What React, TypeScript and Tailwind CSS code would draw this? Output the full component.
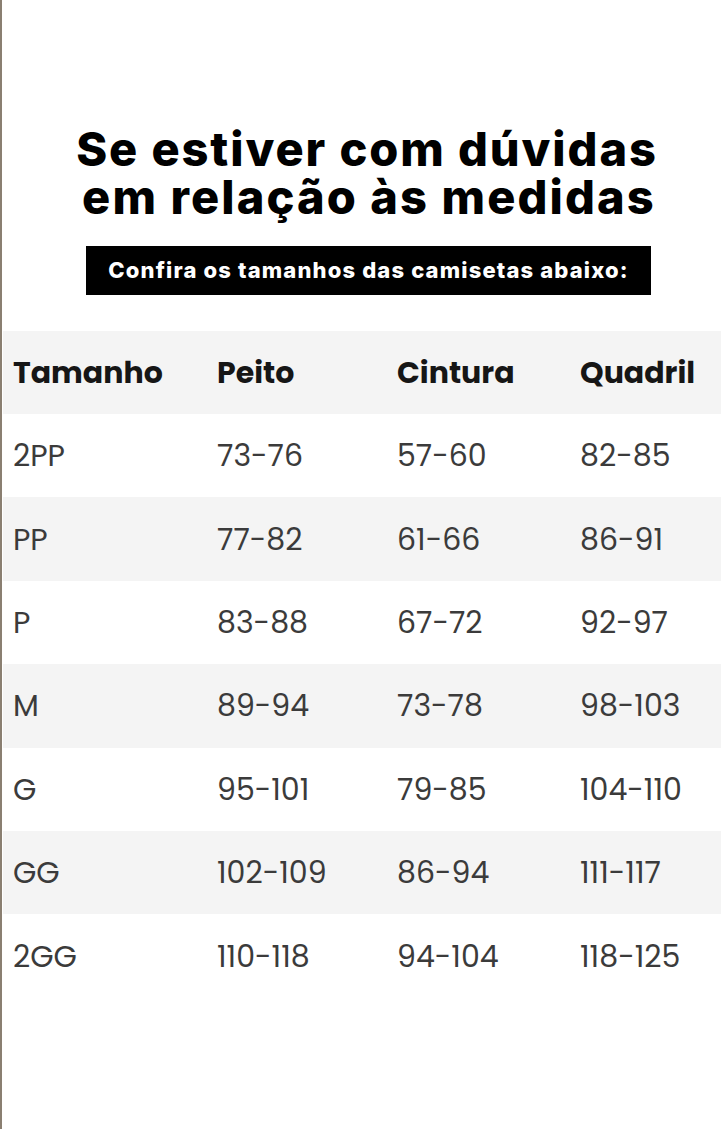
import React from "react";

const rows: [string, string, string, string][] = [
  ["2PP", "73-76", "57-60", "82-85"],
  ["PP", "77-82", "61-66", "86-91"],
  ["P", "83-88", "67-72", "92-97"],
  ["M", "89-94", "73-78", "98-103"],
  ["G", "95-101", "79-85", "104-110"],
  ["GG", "102-109", "86-94", "111-117"],
  ["2GG", "110-118", "94-104", "118-125"],
];

export default function App() {
  return (
    <div className="w-[721px] h-[1129px] bg-white flex overflow-hidden">
      <div className="w-[2px] bg-[#8a7f71] shrink-0" />
      <div className="flex-1 flex flex-col pl-px">
        <div className="flex flex-col items-center pt-[125px] pl-[10px] font-['Inter',sans-serif] font-extrabold text-black text-[47px] leading-[48px] tracking-[1.9px]">
          <div>Se estiver com dúvidas</div>
          <div className="pl-[4px] tracking-[2.1px]">em relação às medidas</div>
        </div>
        <div className="mt-[25px] ml-[83px] w-[565px] h-[49px] bg-black flex items-center justify-center font-['Inter',sans-serif] font-extrabold text-white text-[22px] tracking-[1.15px]">
          Confira os tamanhos das camisetas abaixo:
        </div>
        <div className="mt-[36px] flex flex-col font-['Poppins','Noto_Sans',sans-serif]">
          <div className="h-[83px] bg-[#f4f4f4] grid grid-cols-[204px_180px_183px_1fr] items-center pl-[10px] font-bold text-[30px] text-[#161616]">
            <div>Tamanho</div>
            <div>Peito</div>
            <div>Cintura</div>
            <div>Quadril</div>
          </div>
          {rows.map((r, i) => (
            <div
              key={r[0]}
              className={`h-[83.4px] grid grid-cols-[204px_180px_183px_1fr] items-center pl-[10px] text-[30px] text-[#3b3b3b] ${i % 2 === 1 ? "bg-[#f4f4f4]" : "bg-white"}`}
            >
              {r.map((c, j) => (
                <div key={j}>{c}</div>
              ))}
            </div>
          ))}
        </div>
      </div>
    </div>
  );
}
